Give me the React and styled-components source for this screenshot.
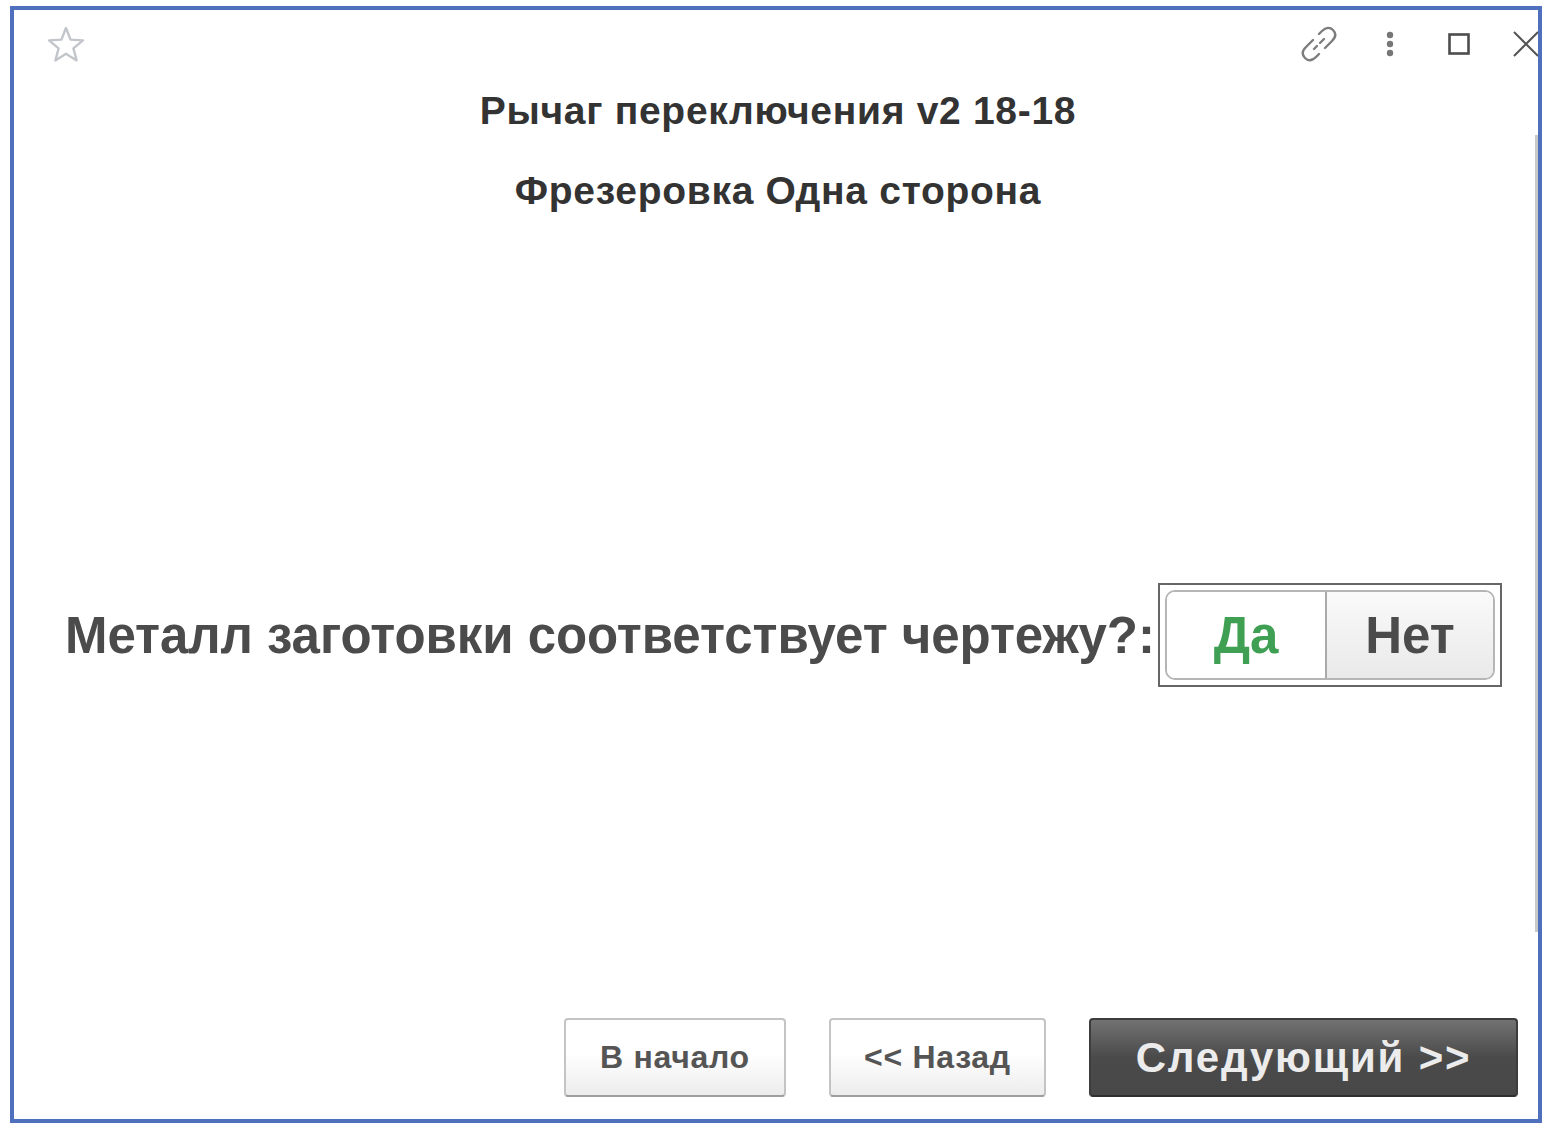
import React from 'react';
import styled, { createGlobalStyle } from 'styled-components';

const GlobalStyle = createGlobalStyle`
  html, body {
    margin: 0;
    background: #fff;
  }
  body {
    font-family: "Liberation Sans", Arial, sans-serif;
  }
`;

const Page = styled.div`
  padding: 6px 4px 11px 10px;
  height: 1134px;
  box-sizing: border-box;
`;

const Frame = styled.div`
  position: relative;
  height: 100%;
  box-sizing: border-box;
  border: 4px solid #4f71bd;
  display: flex;
  flex-direction: column;
  overflow: hidden;
`;

const Scrollbar = styled.div`
  position: absolute;
  right: 0;
  top: 125px;
  width: 3px;
  height: 797px;
  background: #c9c9c9;
`;

const TopBar = styled.div`
  display: flex;
  align-items: center;
  height: 68px;
  padding-left: 32px;
`;

const Actions = styled.div`
  margin-left: auto;
  margin-right: -39px;
  display: flex;
  align-items: center;
`;

const IconSlot = styled.span`
  display: flex;
  width: ${(p) => p.$w}px;
  justify-content: center;
`;

const Title = styled.div`
  text-align: center;
  font-weight: 700;
  font-size: 39px;
  letter-spacing: 0.7px;
  line-height: 43px;
  color: #333;
  margin-top: ${(p) => p.$top}px;
  padding-left: 4px;
`;

const Middle = styled.div`
  flex: 1;
  display: flex;
  align-items: center;
  padding-left: 51px;
  padding-top: 40px;
`;

const Question = styled.div`
  font-weight: 700;
  font-size: 51px;
  letter-spacing: -0.07px;
  color: #4b4b4b;
  white-space: nowrap;
  width: 1093px;
`;

const ToggleFrame = styled.div`
  width: 344px;
  height: 104px;
  box-sizing: border-box;
  border: 2px solid #666;
  padding: 5px;
`;

const Toggle = styled.div`
  display: flex;
  height: 100%;
  box-sizing: border-box;
  border: 2px solid #b5b5b5;
  border-radius: 10px;
  overflow: hidden;
`;

const Segment = styled.div`
  display: flex;
  align-items: center;
  justify-content: center;
  font-weight: 700;
  font-size: 51px;
  width: ${(p) => (p.$active ? '158px' : 'auto')};
  flex: ${(p) => (p.$active ? 'none' : 1)};
  color: ${(p) => (p.$active ? '#3f9f52' : '#4b4b4b')};
  background: ${(p) => (p.$active ? '#fff' : 'linear-gradient(#fafafa, #e9e9e9)')};
  border-right: ${(p) => (p.$active ? '2px solid #aaa' : 'none')};
`;

const Footer = styled.div`
  display: flex;
  justify-content: flex-end;
  padding-right: 20px;
  padding-bottom: 22px;
`;

const Button = styled.div`
  display: flex;
  align-items: center;
  justify-content: center;
  box-sizing: border-box;
  width: ${(p) => p.$w}px;
  height: 79px;
  margin-left: ${(p) => p.$gap}px;
  border-radius: 4px;
  font-weight: 700;
  font-size: ${(p) => (p.$primary ? '42px' : '32px')};
  letter-spacing: ${(p) => (p.$primary ? '1.8px' : '0.7px')};
  color: ${(p) => (p.$primary ? '#ececec' : '#555')};
  background: ${(p) => (p.$primary ? 'linear-gradient(#727272, #4a4a4a 50%, #484848)' : 'linear-gradient(#fff 45%, #ececec)')};
  border: 2px solid ${(p) => (p.$primary ? '#3d3d3d' : '#c4c4c4')};
  border-bottom-color: ${(p) => (p.$primary ? '#2f2f2f' : '#9e9e9e')};
`;

const StarIcon = () => (
  <svg width="40" height="38" viewBox="0 0 40 38" fill="none" stroke="#c2c6cb" strokeWidth="2.4" strokeLinejoin="round">
    <path d="M20 3 L24.6 14.6 L37 15.4 L27.4 23.4 L30.6 35.4 L20 28.8 L9.4 35.4 L12.6 23.4 L3 15.4 L15.4 14.6 Z" />
  </svg>
);

const LinkIcon = () => (
  <svg width="36" height="36" viewBox="0 0 36 36" fill="none" stroke="#7d7d7d" strokeWidth="2.4" strokeLinecap="round">
    <path d="M12 14 L5 21 C1 25 1 29 4 32 C7 35 11 35 15 31 L18 28" />
    <path d="M24 22 L31 15 C35 11 35 7 32 4 C29 1 25 1 21 5 L18 8" />
    <path d="M13 23 L16 20 M19 17 L23 13" />
  </svg>
);

const MoreIcon = () => (
  <svg width="10" height="26" viewBox="0 0 10 26" fill="#777">
    <circle cx="5" cy="4" r="3.2" />
    <circle cx="5" cy="13" r="3.2" />
    <circle cx="5" cy="22" r="3.2" />
  </svg>
);

const MaximizeIcon = () => (
  <svg width="22" height="22" viewBox="0 0 22 22" fill="none" stroke="#4d4d4d" strokeWidth="2.6">
    <rect x="1.5" y="1.5" width="19" height="19" />
  </svg>
);

const CloseIcon = () => (
  <svg width="26" height="26" viewBox="0 0 26 26" fill="none" stroke="#555" strokeWidth="2">
    <path d="M1 1 L25 25 M25 1 L1 25" />
  </svg>
);

export default function App() {
  return (
    <Page>
      <GlobalStyle />
      <Frame>
        <Scrollbar />
        <TopBar>
          <StarIcon />
          <Actions>
            <IconSlot $w={36}><LinkIcon /></IconSlot>
            <IconSlot $w={106}><MoreIcon /></IconSlot>
            <IconSlot $w={32}><MaximizeIcon /></IconSlot>
            <IconSlot $w={102}><CloseIcon /></IconSlot>
          </Actions>
        </TopBar>
        <Title $top={11}>Рычаг переключения v2 18-18</Title>
        <Title $top={37}>Фрезеровка Одна сторона</Title>
        <Middle>
          <Question>Металл заготовки соответствует чертежу?:</Question>
          <ToggleFrame>
            <Toggle>
              <Segment $active>Да</Segment>
              <Segment>Нет</Segment>
            </Toggle>
          </ToggleFrame>
        </Middle>
        <Footer>
          <Button $w={222} $gap={0}>В начало</Button>
          <Button $w={217} $gap={43}>&lt;&lt; Назад</Button>
          <Button $w={429} $gap={43} $primary>Следующий &gt;&gt;</Button>
        </Footer>
      </Frame>
    </Page>
  );
}
